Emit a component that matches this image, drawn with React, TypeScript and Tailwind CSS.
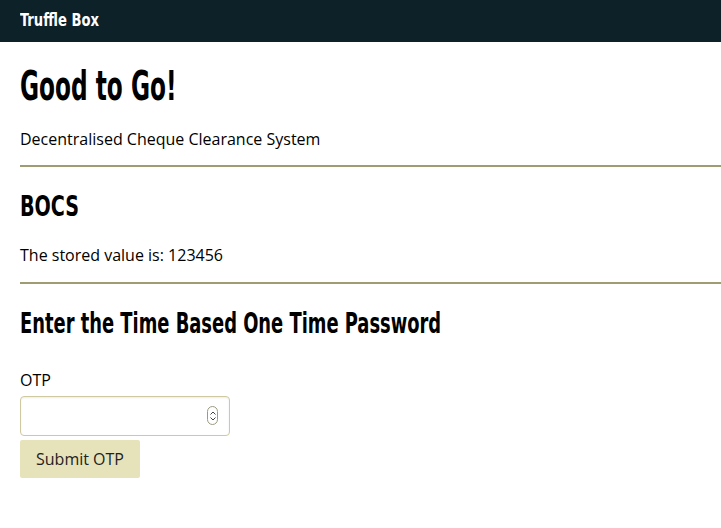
import React, { useState } from 'react';

const heading = { fontFamily: '"DejaVu Sans Condensed", "Liberation Sans", sans-serif' };
const body = { fontFamily: '"Open Sans", "Liberation Sans", sans-serif' };

const App: React.FC = () => {
  const [otp, setOtp] = useState('');

  return (
    <div className="min-h-screen bg-white text-black" style={body}>
      {/* Nav bar */}
      <nav className="h-[42px] bg-[#0d2129] flex items-center px-5">
        <span className="inline-block origin-left scale-x-[0.86] text-white text-[17px] font-bold" style={heading}>Truffle Box</span>
      </nav>

      <main className="px-5">
        <h1 className="pt-[24px] leading-none">
          <span className="inline-block origin-left scale-x-[0.63] text-[41px] font-bold whitespace-nowrap" style={heading}>Good to Go!</span>
        </h1>
        <p className="text-[16px] mt-[22px] leading-[20px]">Decentralised Cheque Clearance System</p>
        <hr className="-mr-5 mt-[16px] border-t-2 border-[#9f9c74]" />

        <h2 className="mt-[26px] leading-none">
          <span className="inline-block origin-left scale-x-[0.76] text-[28px] font-bold whitespace-nowrap" style={heading}>BOCS</span>
        </h2>
        <p className="text-[16px] mt-[24px] leading-[20px]">The stored value is: 123456</p>
        <hr className="-mr-5 mt-[17px] border-t-2 border-[#9f9c74]" />

        <h2 className="mt-[26px] leading-none">
          <span className="inline-block origin-left scale-x-[0.71] text-[28px] font-bold whitespace-nowrap" style={heading}>Enter the Time Based One Time Password</span>
        </h2>

        <form className="mt-[32px] flex flex-col items-start" onSubmit={(e) => e.preventDefault()}>
          <label className="text-[16px] leading-[20px]">OTP</label>
          <div className="relative mt-[6px]">
            <input
              value={otp}
              onChange={(e) => setOtp(e.target.value)}
              className="w-[210px] h-[40px] border border-[#cfc9a0] rounded-[4px] px-3 outline-none shadow-[inset_0_1px_2px_rgba(0,0,0,0.08)]"
            />
            <div className="absolute right-[12px] top-[10px] w-[11px] h-[19px] border border-[#9c9a80] rounded-full flex flex-col items-center justify-center gap-[2px]">
              <svg width="6" height="4" viewBox="0 0 6 4"><path d="M0.5 3.5 L3 1 L5.5 3.5" fill="none" stroke="#444" strokeWidth="1" /></svg>
              <svg width="6" height="4" viewBox="0 0 6 4"><path d="M0.5 0.5 L3 3 L5.5 0.5" fill="none" stroke="#444" strokeWidth="1" /></svg>
            </div>
          </div>
          <button type="submit" className="mt-[4px] w-[120px] h-[38px] bg-[#e6e3bb] rounded-[2px] text-[16px] text-[#222]">Submit OTP</button>
        </form>
      </main>
    </div>
  );
};

export default App;
